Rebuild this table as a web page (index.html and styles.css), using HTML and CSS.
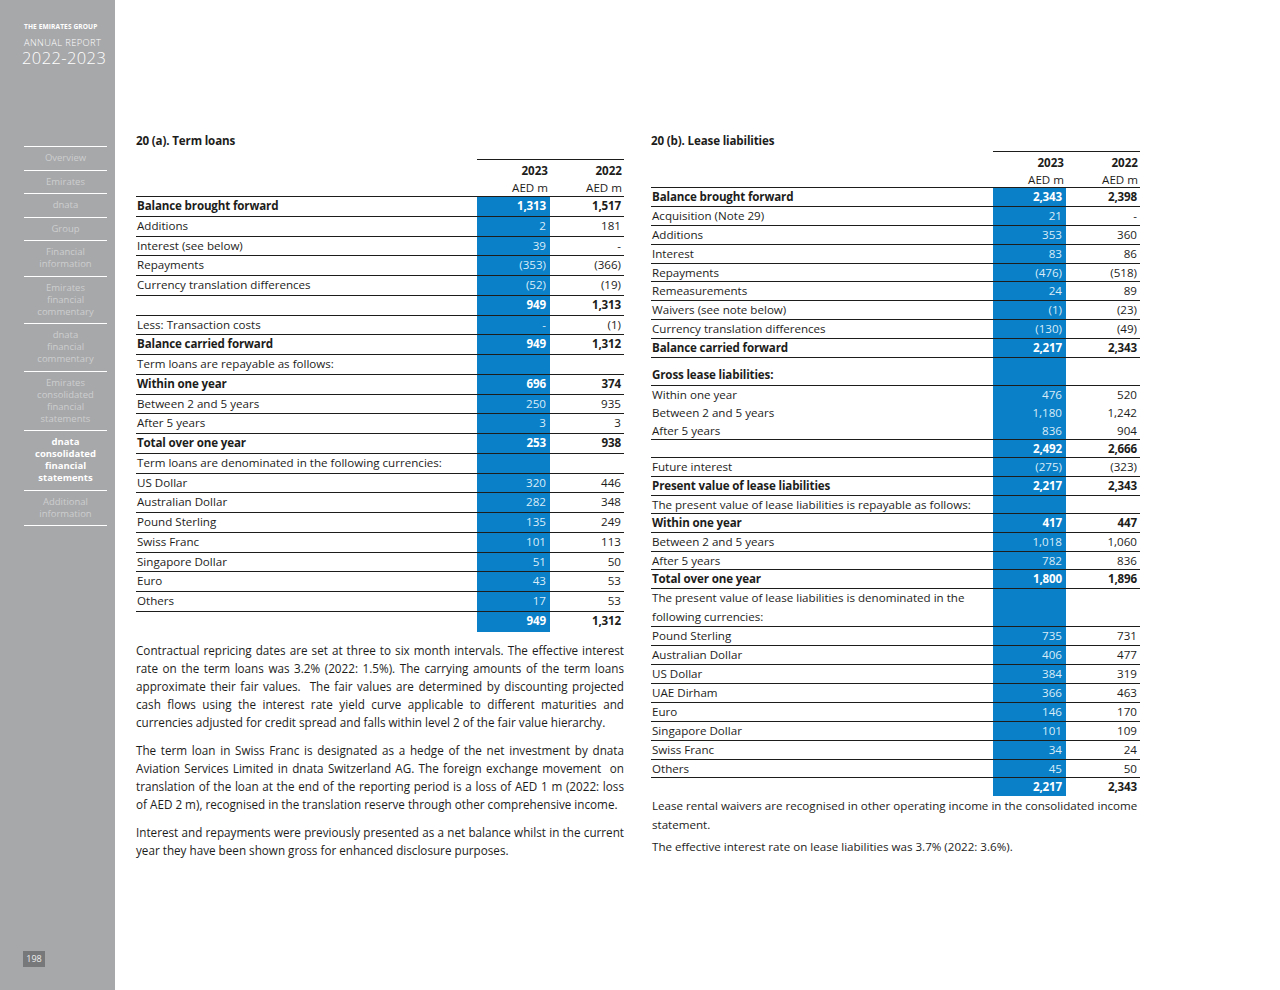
FILE: index.html
```html
<!DOCTYPE html>
<html lang="en">
<head>
    <meta charset="UTF-8">
    <title>The Emirates Group Annual Report 2022-2023 - page 198</title>
    <link rel="stylesheet" href="styles.css">
</head>
<body>
    <aside class="sidebar">
        <div class="brand">
            <div class="group">THE EMIRATES GROUP</div>
            <div class="report">ANNUAL REPORT</div>
            <div class="years">2022-2023</div>
        </div>
        <nav class="nav">
            <a>Overview</a>
            <a>Emirates</a>
            <a>dnata</a>
            <a>Group</a>
            <a>Financial<br>information</a>
            <a>Emirates<br>financial<br>commentary</a>
            <a>dnata<br>financial<br>commentary</a>
            <a>Emirates<br>consolidated<br>financial<br>statements</a>
            <a class="active">dnata<br>consolidated<br>financial<br>statements</a>
            <a>Additional<br>information</a>
        </nav>
        <div class="page-no">198</div>
    </aside>

    <main class="content">
        <section class="col left">
            <h3>20 (a). Term loans</h3>
            <div class="fin">
                <div class="row head"><span></span><span class="c">2023<br><em>AED m</em></span><span class="p">2022<br><em>AED m</em></span></div>
                <div class="row b"><span>Balance brought forward</span><span class="c">1,313</span><span class="p">1,517</span></div>
                <div class="row"><span>Additions</span><span class="c">2</span><span class="p">181</span></div>
                <div class="row"><span>Interest (see below)</span><span class="c">39</span><span class="p">-</span></div>
                <div class="row"><span>Repayments</span><span class="c">(353)</span><span class="p">(366)</span></div>
                <div class="row"><span>Currency translation differences</span><span class="c">(52)</span><span class="p">(19)</span></div>
                <div class="row b"><span></span><span class="c">949</span><span class="p">1,313</span></div>
                <div class="row"><span>Less: Transaction costs</span><span class="c">-</span><span class="p">(1)</span></div>
                <div class="row b"><span>Balance carried forward</span><span class="c">949</span><span class="p">1,312</span></div>
                <div class="row"><span>Term loans are repayable as follows:</span><span class="c"></span><span class="p"></span></div>
                <div class="row b"><span>Within one year</span><span class="c">696</span><span class="p">374</span></div>
                <div class="row"><span>Between 2 and 5 years</span><span class="c">250</span><span class="p">935</span></div>
                <div class="row"><span>After 5 years</span><span class="c">3</span><span class="p">3</span></div>
                <div class="row b"><span>Total over one year</span><span class="c">253</span><span class="p">938</span></div>
                <div class="row"><span>Term loans are denominated in the following currencies:</span><span class="c"></span><span class="p"></span></div>
                <div class="row"><span>US Dollar</span><span class="c">320</span><span class="p">446</span></div>
                <div class="row"><span>Australian Dollar</span><span class="c">282</span><span class="p">348</span></div>
                <div class="row"><span>Pound Sterling</span><span class="c">135</span><span class="p">249</span></div>
                <div class="row"><span>Swiss Franc</span><span class="c">101</span><span class="p">113</span></div>
                <div class="row"><span>Singapore Dollar</span><span class="c">51</span><span class="p">50</span></div>
                <div class="row"><span>Euro</span><span class="c">43</span><span class="p">53</span></div>
                <div class="row"><span>Others</span><span class="c">17</span><span class="p">53</span></div>
                <div class="row b last"><span></span><span class="c">949</span><span class="p">1,312</span></div>
            </div>
            <div class="notes">
                <p>Contractual repricing dates are set at three to six month intervals. The effective interest rate on the term loans was 3.2% (2022: 1.5%). The carrying amounts of the term loans approximate their fair values.&nbsp; The fair values are determined by discounting projected cash flows using the interest rate yield curve applicable to different maturities and currencies adjusted for credit spread and falls within level 2 of the fair value hierarchy.</p>
                <p>The term loan in Swiss Franc is designated as a hedge of the net investment by dnata Aviation Services Limited in dnata Switzerland AG. The foreign exchange movement&nbsp; on translation of the loan at the end of the reporting period is a loss of AED 1 m (2022: loss of AED 2 m), recognised in the translation reserve through other comprehensive income.</p>
                <p>Interest and repayments were previously presented as a net balance whilst in the current year they have been shown gross for enhanced disclosure purposes.</p>
            </div>
        </section>

        <section class="col right">
            <h3>20 (b). Lease liabilities</h3>
            <div class="fin tight">
                <div class="row head"><span></span><span class="c">2023<br><em>AED m</em></span><span class="p">2022<br><em>AED m</em></span></div>
                <div class="row b"><span>Balance brought forward</span><span class="c">2,343</span><span class="p">2,398</span></div>
                <div class="row"><span>Acquisition (Note 29)</span><span class="c">21</span><span class="p">-</span></div>
                <div class="row"><span>Additions</span><span class="c">353</span><span class="p">360</span></div>
                <div class="row"><span>Interest</span><span class="c">83</span><span class="p">86</span></div>
                <div class="row"><span>Repayments</span><span class="c">(476)</span><span class="p">(518)</span></div>
                <div class="row"><span>Remeasurements</span><span class="c">24</span><span class="p">89</span></div>
                <div class="row"><span>Waivers (see note below)</span><span class="c">(1)</span><span class="p">(23)</span></div>
                <div class="row"><span>Currency translation differences</span><span class="c">(130)</span><span class="p">(49)</span></div>
                <div class="row b"><span>Balance carried forward</span><span class="c">2,217</span><span class="p">2,343</span></div>
                <div class="row b gap"><span>Gross lease liabilities:</span><span class="c"></span><span class="p"></span></div>
                <div class="row open"><span>Within one year</span><span class="c">476</span><span class="p">520</span></div>
                <div class="row open"><span>Between 2 and 5 years</span><span class="c">1,180</span><span class="p">1,242</span></div>
                <div class="row short"><span>After 5 years</span><span class="c">836</span><span class="p">904</span></div>
                <div class="row b short"><span></span><span class="c">2,492</span><span class="p">2,666</span></div>
                <div class="row"><span>Future interest</span><span class="c">(275)</span><span class="p">(323)</span></div>
                <div class="row b"><span>Present value of lease liabilities</span><span class="c">2,217</span><span class="p">2,343</span></div>
                <div class="row short"><span>The present value of lease liabilities is repayable as follows:</span><span class="c"></span><span class="p"></span></div>
                <div class="row b"><span>Within one year</span><span class="c">417</span><span class="p">447</span></div>
                <div class="row"><span>Between 2 and 5 years</span><span class="c">1,018</span><span class="p">1,060</span></div>
                <div class="row"><span>After 5 years</span><span class="c">782</span><span class="p">836</span></div>
                <div class="row b"><span>Total over one year</span><span class="c">1,800</span><span class="p">1,896</span></div>
                <div class="row double"><span>The present value of lease liabilities is denominated in the<br>following currencies:</span><span class="c"></span><span class="p"></span></div>
                <div class="row"><span>Pound Sterling</span><span class="c">735</span><span class="p">731</span></div>
                <div class="row"><span>Australian Dollar</span><span class="c">406</span><span class="p">477</span></div>
                <div class="row"><span>US Dollar</span><span class="c">384</span><span class="p">319</span></div>
                <div class="row"><span>UAE Dirham</span><span class="c">366</span><span class="p">463</span></div>
                <div class="row"><span>Euro</span><span class="c">146</span><span class="p">170</span></div>
                <div class="row"><span>Singapore Dollar</span><span class="c">101</span><span class="p">109</span></div>
                <div class="row"><span>Swiss Franc</span><span class="c">34</span><span class="p">24</span></div>
                <div class="row"><span>Others</span><span class="c">45</span><span class="p">50</span></div>
                <div class="row b last short"><span></span><span class="c">2,217</span><span class="p">2,343</span></div>
            </div>
            <div class="notes loose">
                <p>Lease rental waivers are recognised in other operating income in the consolidated income statement.</p>
                <p>The effective interest rate on lease liabilities was 3.7% (2022: 3.6%).</p>
            </div>
        </section>
    </main>
</body>
</html>
```

FILE: styles.css
```css
body {
    margin: 0;
    font-family: "Open Sans", "Noto Sans", Arial, sans-serif;
    color: #1d1d1b;
    background: #fff;
    display: flex;
    min-height: 990px;
}

/* left grey band */
.sidebar {
    width: 115px;
    flex-shrink: 0;
    background: #a7a8aa;
    box-sizing: border-box;
    padding: 21px 8px 0 24px;
    position: relative;
    color: #fff;
}

.brand .group {
    font-size: 6.6px;
    font-weight: 700;
    letter-spacing: 0.1px;
    line-height: 12px;
}

.brand .report {
    margin-top: 5px;
    font-size: 9.3px;
    font-weight: 300;
    letter-spacing: 0.4px;
    line-height: 10px;
}

.brand .years {
    margin-left: -2px;
    margin-top: 3px;
    font-size: 16.5px;
    font-weight: 300;
    letter-spacing: 0.4px;
    line-height: 13px;
}

.nav {
    margin-top: 82px;
    border-top: 1px solid #fff;
}

.nav a {
    display: block;
    border-bottom: 1px solid #fff;
    padding: 5.25px 0;
    text-align: center;
    font-size: 9.5px;
    line-height: 12px;
    color: #cdcecf;
}

.nav a.active {
    color: #fff;
    font-weight: 700;
}

.page-no {
    position: absolute;
    left: 23px;
    top: 951px;
    width: 22px;
    height: 16px;
    background: #77787a;
    color: #eee;
    font-size: 9px;
    line-height: 16px;
    text-align: center;
}

/* main two columns */
.content {
    display: flex;
    gap: 27px;
    padding: 133px 0 0 21px;
}

.col.left {
    width: 488px;
}

.col.right {
    width: 489px;
}

.col h3 {
    margin: 0 0 10px;
    font-size: 11.6px;
    line-height: 16px;
    font-weight: 700;
    letter-spacing: -0.15px;
}

.col.right h3 {
    margin-bottom: 2px;
}

.fin {
    font-size: 11.6px;
}

.fin .row {
    display: grid;
    grid-template-columns: 1fr 73px 74px;
    height: 19.75px;
    box-sizing: border-box;
    border-bottom: 1px solid #1d1d1b;
    line-height: 18px;
}

.fin.tight .row {
    height: 18.9px;
    line-height: 17.5px;
}

.fin .row > span {
    padding-left: 1px;
    white-space: nowrap;
}

.fin .row .c,
.fin .row .p {
    text-align: right;
    padding-right: 3px;
}

.fin .row .c {
    background: #0a80c8;
    color: #d9ecf8;
    padding-right: 4px;
}

.fin .row.b {
    font-weight: 700;
    letter-spacing: -0.15px;
}

.fin .row.b .c {
    color: #fff;
}

.fin .row.head {
    height: 38px;
    font-weight: 700;
}

.fin.tight .row.head {
    height: 37px;
}

.fin .row.head .c,
.fin .row.head .p {
    background: none;
    color: #1d1d1b;
    border-top: 1px solid #1d1d1b;
    line-height: 17px;
    padding-top: 2px;
    padding-right: 2px;
}

.fin .row.head em {
    font-style: normal;
    font-weight: 400;
}

.fin .row.last {
    border-bottom: none;
}

.fin.tight .row.gap {
    height: 28px;
}

.fin.tight .row.gap > span:first-child {
    padding-top: 8px;
}

.fin.tight .row.open {
    height: 18px;
    border-bottom: none;
}

.fin.tight .row.short {
    height: 18px;
    line-height: 17px;
}

.fin.tight .row.double {
    height: 38px;
}

.fin.tight .row.double > span:first-child {
    white-space: normal;
    line-height: 18.5px;
}

.notes {
    font-size: 11.7px;
    line-height: 18px;
    margin-top: 9px;
}

.notes p {
    margin: 0 0 10px;
    text-align: justify;
}

.notes.loose {
    margin-top: 0;
    padding-left: 1px;
    font-size: 11.6px;
    line-height: 19px;
}

.notes.loose p {
    text-align: left;
    margin-bottom: 3px;
}
```
